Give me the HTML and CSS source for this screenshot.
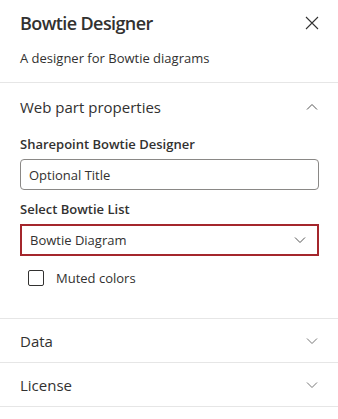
FILE: index.html
```html
<!DOCTYPE html>
<html lang="en">
<head>
  <meta charset="UTF-8">
  <meta name="viewport" content="width=device-width, initial-scale=1.0">
  <title>Bowtie Designer</title>
  <link rel="stylesheet" href="styles.css">
</head>
<body>
  <div class="painel">
    <div class="cabecalho">
      <h1>Bowtie Designer</h1>
      <button class="fechar" aria-label="Close">
        <svg width="14" height="14" viewBox="0 0 14 14"><path d="M1 1 L13 13 M13 1 L1 13" stroke="#333" stroke-width="1.1" fill="none"/></svg>
      </button>
    </div>
    <p class="descricao">A designer for Bowtie diagrams</p>

    <div class="grupo aberto">
      <div class="grupo-titulo">
        <span>Web part properties</span>
        <svg width="12" height="8" viewBox="0 0 12 8"><path d="M1 6.5 L6 1.5 L11 6.5" stroke="#555" stroke-width="1" fill="none"/></svg>
      </div>
      <div class="campos">
        <label for="titulo">Sharepoint Bowtie Designer</label>
        <input type="text" id="titulo" value="Optional Title">

        <label>Select Bowtie List</label>
        <div class="dropdown">
          <span>Bowtie Diagram</span>
          <svg width="12" height="8" viewBox="0 0 12 8"><path d="M1 1.5 L6 6.5 L11 1.5" stroke="#555" stroke-width="1" fill="none"/></svg>
        </div>

        <div class="check">
          <span class="caixa"></span>
          <span>Muted colors</span>
        </div>
      </div>
    </div>

    <div class="grupo">
      <div class="grupo-titulo">
        <span>Data</span>
        <svg width="12" height="8" viewBox="0 0 12 8"><path d="M1 1.5 L6 6.5 L11 1.5" stroke="#777" stroke-width="1" fill="none"/></svg>
      </div>
    </div>

    <div class="grupo">
      <div class="grupo-titulo">
        <span>License</span>
        <svg width="12" height="8" viewBox="0 0 12 8"><path d="M1 1.5 L6 6.5 L11 1.5" stroke="#777" stroke-width="1" fill="none"/></svg>
      </div>
    </div>
  </div>
</body>
</html>
```

FILE: styles.css
```css
body{
  margin: 0;
  background: #fff;
  color: #323130;
  font-family: "Open Sans", "Noto Sans", sans-serif;
}
.painel{
  width: 338px;
}
.cabecalho{
  display: flex;
  justify-content: space-between;
  align-items: center;
  padding: 7px 14px 0 20px;
  height: 32px;
}
h1{
  margin: 0;
  font-size: 18px;
  font-weight: 600;
  letter-spacing: -0.6px;
}
.fechar{
  width: 24px;
  height: 24px;
  border: none;
  background: none;
  padding: 0;
  display: flex;
  align-items: center;
  justify-content: center;
}
.descricao{
  margin: 0;
  padding: 9px 20px 0 20px;
  height: 34px;
  font-size: 13px;
  line-height: 20px;
  border-bottom: 1px solid #e6e6e6;
}
.grupo{
  border-bottom: 1px solid #e6e6e6;
}
.grupo-titulo{
  display: flex;
  justify-content: space-between;
  align-items: center;
  height: 43px;
  padding: 0 20px 0 20px;
  font-size: 15px;
}
.aberto .grupo-titulo{
  height: 46px;
  padding-top: 1px;
}
.campos{
  padding: 5px 19px 31px 20px;
}
label{
  display: block;
  font-size: 13px;
  font-weight: 600;
  line-height: 18px;
  margin: 0 0 6px 0;
}
input{
  display: block;
  box-sizing: border-box;
  width: 100%;
  height: 31px;
  margin: 0 0 10px 0;
  padding: 0 8px;
  border: 1px solid #8a8886;
  border-radius: 4px;
  font-family: inherit;
  font-size: 13px;
  color: #323130;
}
.dropdown{
  box-sizing: border-box;
  height: 32px;
  border: 2px solid #a4262c;
  display: flex;
  justify-content: space-between;
  align-items: center;
  padding: 0 11px 0 8px;
  font-size: 13px;
}
.check{
  display: flex;
  align-items: center;
  gap: 12px;
  margin: 13px 0 0 8px;
  font-size: 13px;
}
.caixa{
  display: block;
  width: 14px;
  height: 14px;
  border: 1px solid #323130;
  border-radius: 2px;
}
```
